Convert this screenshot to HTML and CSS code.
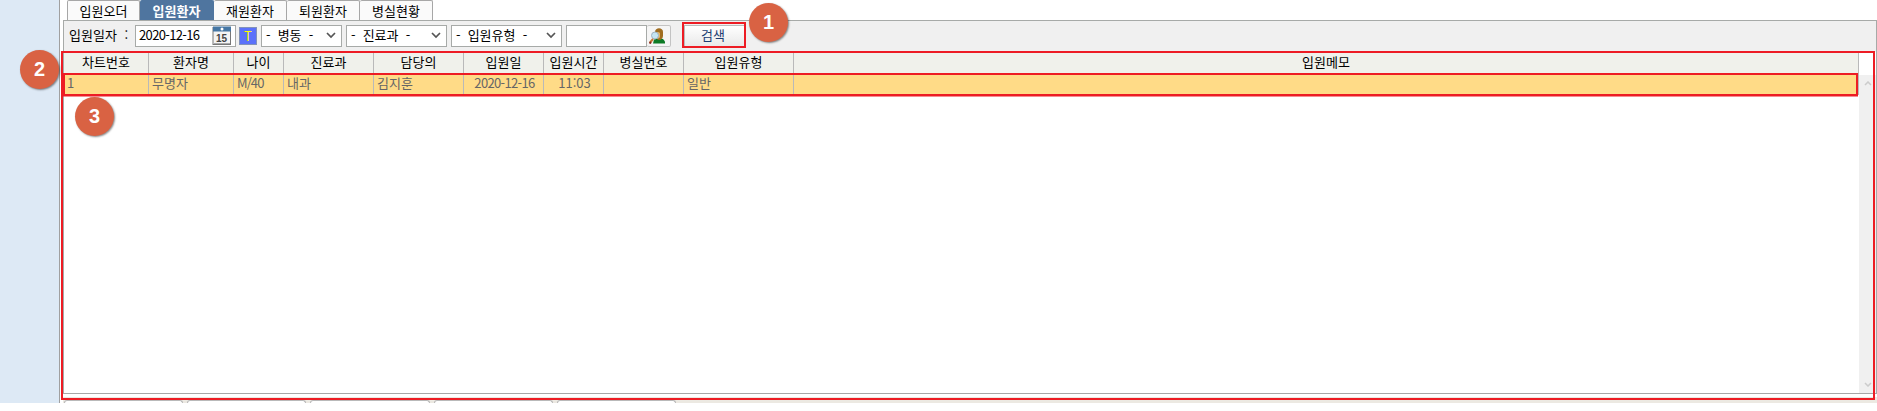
FILE: index.html
```html
<!DOCTYPE html>
<html lang="ko">
<head>
<meta charset="utf-8">
<title>입원환자</title>
<link rel="stylesheet" href="styles.css">
</head>
<body>
<div class="app">
  <aside class="side"></aside>
  <main class="main">
    <nav class="tabs">
      <div class="tab first">입원오더</div><div class="tab active">입원환자</div><div class="tab">재원환자</div><div class="tab">퇴원환자</div><div class="tab">병실현황</div>
    </nav>
    <section class="toolbar">
      <span class="label">입원일자 :</span>
      <div class="date"><span class="num">2020-12-16</span>
        <svg class="cal" width="20" height="20" viewBox="0 0 20 20"><rect x="1" y="1.5" width="17.500" height="17" fill="#f4f4f4" stroke="#777"/><path d="M2 17.500h16" stroke="#aaa"/><rect x="1" y="0.500" width="18" height="5" fill="#4677a4"/><circle cx="10" cy="3" r="1.500" fill="#fff"/><text x="4" y="15.500" class="caltext">15</text></svg>
      </div>
      <div class="today">T</div>
      <div class="select s1"><span>- 병동 -</span><svg width="10" height="7" viewBox="0 0 10 7"><path d="M1 1l4 4 4-4"/></svg></div>
      <div class="select s2"><span>- 진료과 -</span><svg width="10" height="7" viewBox="0 0 10 7"><path d="M1 1l4 4 4-4"/></svg></div>
      <div class="select s3"><span>- 입원유형 -</span><svg width="10" height="7" viewBox="0 0 10 7"><path d="M1 1l4 4 4-4"/></svg></div>
      <div class="field"></div>
      <div class="find"><svg width="16" height="16" viewBox="0 0 16 16"><path d="M4 15.500l1-4 5-1.500 4 1 2 2.500v2z" fill="#0d7a25"/><path d="M6 4c0-5 8-5 8 0v4c0 2-2 4-4 4S6 9 6 7z" fill="#a06d20"/><path d="M7 5c1-1.500 3-1.500 4 0v4c-1 2-3 2-4 0z" fill="#e5b565"/><circle cx="6" cy="7.500" r="3.500" fill="#c4e5f4" stroke="#9fb4c4"/><path d="M4 11l-3 3.500" stroke="#c87533" stroke-width="2"/><path d="M0.500 15.500l1.500-1.500" stroke="#8b2a1c" stroke-width="2"/></svg></div>
      <button class="search">검색</button>
    </section>
    <section class="grid">
      <div class="row head"><div>차트번호</div><div>환자명</div><div>나이</div><div>진료과</div><div>담당의</div><div>입원일</div><div>입원시간</div><div>병실번호</div><div>입원유형</div><div>입원메모</div></div>
      <div class="row data"><div class="num">1</div><div>무명자</div><div class="num age">M/40</div><div>내과</div><div>김지훈</div><div class="num mid">2020-12-16</div><div class="time mid">11:03</div><div></div><div>일반</div><div></div></div>
      <div class="scroll"><svg width="8" height="5" viewBox="0 0 8 5"><path d="M1 4l3-3 3 3"/></svg><svg width="8" height="5" viewBox="0 0 8 5"><path d="M1 1l3 3 3-3"/></svg></div>
    </section>
    <footer class="bottom"><i></i><i></i><i></i><i></i><i></i></footer>
  </main>
  <div class="frame all"></div>
  <div class="frame line"></div>
  <div class="frame btn"></div>
  <div class="badge b1">1</div>
  <div class="badge b2">2</div>
  <div class="badge b3">3</div>
</div>
</body>
</html>
```
FILE: styles.css
```css
* { box-sizing: border-box; }
body { margin: 0; background: #fff; font: 13px/16px "Noto Sans CJK KR", sans-serif; color: #000; overflow: hidden; }
.app { position: relative; display: flex; width: 1877px; height: 403px; }
.side { width: 60px; background: #dde9f5; border-right: 1px solid #a0a0a0; }
.main { width: 1817px; display: flex; flex-direction: column; }
.tabs { display: flex; height: 20px; padding-left: 7px; }
.tab { width: 73px; height: 20px; border: 1px solid #a7a7a7; border-left: 0; border-bottom: 0; border-radius: 2px 2px 0 0; background: #fafafa; text-align: center; line-height: 19px; }
.tab.first { border-left: 1px solid #a7a7a7; }
.tab.active { width: 74px; background: #4f759f; border-color: #4f759f; color: #fff; font-weight: 700; }
.toolbar { margin-left: 3px; height: 32px; display: flex; border: 1px solid #a7aaa8; border-bottom: 0; background: #f0f0f0; padding-top: 4px; }
.label { width: 71px; padding-left: 5px; line-height: 20px; word-spacing: 4px; white-space: nowrap; }
.num { letter-spacing: -.65px; }
.date { width: 101px; height: 22px; border: 1px solid #a7aaa8; background: #fff; display: flex; justify-content: space-between; padding: 0 3px; line-height: 18px; }
.caltext { font: bold 10px "Liberation Sans", sans-serif; fill: #444; }
.today { width: 18px; height: 18px; margin: 2px 0 0 3px; background: #5b71fa; border: 1px solid #8292ba; color: #ff0; text-align: center; line-height: 15px; }
.select { height: 22px; border: 1px solid #a7aaa8; background: #fff; display: flex; justify-content: space-between; align-items: center; padding: 0 5px 2px 4px; word-spacing: 3.5px; white-space: nowrap; }
.select path { fill: none; stroke: #555; stroke-width: 1.7; }
.s1 { width: 81px; margin-left: 4px; }
.s2 { width: 101px; margin-left: 4px; }
.s3 { width: 111px; margin-left: 4px; }
.field { width: 81px; height: 22px; margin-left: 4px; border: 1px solid #a7aaa8; background: #fff; }
.find { width: 24px; height: 22px; padding-right: 3px; border: 1px solid #c3c3c3; border-left: 0; border-radius: 2px; background: #f5f5f5; display: flex; align-items: center; justify-content: center; }
.search { width: 61px; height: 22px; margin-left: 13px; padding: 0 3px 2px 0; border: 1px solid #bbb; background: linear-gradient(#fff, #e9e9e9); color: #1c3e72; font: inherit; }
.grid { position: relative; margin-left: 3px; height: 342px; border-left: 1px solid #a7aaa8; border-right: 1px solid #a7aaa8; border-bottom: 1px solid #a7a7a7; background: #fff; }
.row { display: grid; grid-template-columns: 85px 85px 50px 90px 90px 80px 60px 80px 110px 1065px; width: 1795px; }
.row > div { border-right: 1px solid #b9b9b9; height: 100%; white-space: nowrap; }
.head { height: 22px; background: #f0f1eb; text-align: center; line-height: 19px; }
.data { height: 21px; background: #ffdb87; color: #666; line-height: 17px; }
.data > div { padding-left: 3px; }
.data > .age { letter-spacing: -1.4px; }
.data > .age { letter-spacing: -.9px; }
.data > .mid { text-align: center; padding: 0 0 0 2px; }
.data > .time { letter-spacing: 0; }
.scroll { position: absolute; right: 0; top: 23px; bottom: 0; width: 17px; background: #f0f0f0; display: flex; flex-direction: column; justify-content: space-between; align-items: center; padding: 6px 0; }
.scroll path { fill: none; stroke: #ccc; stroke-width: 1.5; }
.bottom { margin: 3px 0 0 3px; height: 6px; background: #ece9e2; display: flex; gap: 4px; padding: 3px 0 0 1px; }
.bottom i { width: 119.2px; height: 3px; background: #fff; border: 1px solid #b9b9b9; border-bottom: 0; border-radius: 3px 3px 0 0; }
.frame { position: absolute; border: 2px solid #ed1c24; }
.all { left: 61px; top: 51px; width: 1814px; height: 349px; }
.line { left: 63px; top: 73px; width: 1795px; height: 23px; box-shadow: 0 1px #ed1c2480; }
.btn { left: 682px; top: 22px; width: 64px; height: 26px; }
.badge { position: absolute; width: 39px; height: 39px; border-radius: 50%; background: #d96243; color: #fff; box-shadow: 1px 1px 2px #0007; text-align: center; font: bold 20px/38px "Liberation Sans", sans-serif; }
.b1 { left: 749px; top: 3px; }
.b2 { left: 20px; top: 50px; }
.b3 { left: 75px; top: 97px; }
```
